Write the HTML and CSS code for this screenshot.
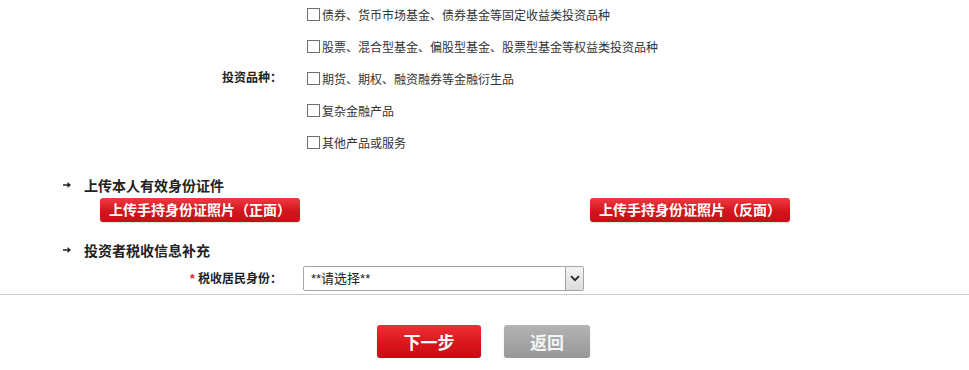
FILE: index.html
```html
<!DOCTYPE html>
<html lang="zh-CN">
<head>
<meta charset="utf-8">
<title>投资者信息</title>
<link rel="stylesheet" href="styles.css">
</head>
<body>
<div class="page">
  <div class="invest">
    <div class="field-label">投资品种：</div>
    <div class="options">
      <label class="opt"><span class="box"></span>债券、货币市场基金、债券基金等固定收益类投资品种</label>
      <label class="opt"><span class="box"></span>股票、混合型基金、偏股型基金、股票型基金等权益类投资品种</label>
      <label class="opt"><span class="box"></span>期货、期权、融资融券等金融衍生品</label>
      <label class="opt"><span class="box"></span>复杂金融产品</label>
      <label class="opt"><span class="box"></span>其他产品或服务</label>
    </div>
  </div>

  <div class="inner">
    <div class="sec-head sec-upload">
      <svg class="arrow" width="8" height="8" viewBox="0 0 8 8"><path d="M0 3.3h4.5V1L8 4 4.5 7V4.7H0z" fill="#222"/></svg>
      <span>上传本人有效身份证件</span>
    </div>
    <div class="upload-row">
      <button class="btn-red">上传手持身份证照片（正面）</button>
      <button class="btn-red">上传手持身份证照片（反面）</button>
    </div>
    <div class="sec-head sec-tax">
      <svg class="arrow" width="8" height="8" viewBox="0 0 8 8"><path d="M0 3.3h4.5V1L8 4 4.5 7V4.7H0z" fill="#222"/></svg>
      <span>投资者税收信息补充</span>
    </div>
  </div>

  <div class="tax-row">
    <div class="field-label"><span class="req">*</span> 税收居民身份：</div>
    <div class="select">
      <span class="select-text">**请选择**</span>
      <span class="select-btn">
        <svg width="10" height="7" viewBox="0 0 10 7"><path d="M1 1.2l4 4 4-4" fill="none" stroke="#222" stroke-width="1.8"/></svg>
      </span>
    </div>
  </div>

  <div class="divider"></div>

  <div class="actions">
    <button class="btn-next">下一步</button>
    <button class="btn-back">返回</button>
  </div>
</div>
</body>
</html>
```

FILE: styles.css
```css
* { box-sizing: border-box; }
html, body { margin: 0; padding: 0; background: #fff; }
body {
  font-family: "Liberation Sans", Arial, "Noto Sans CJK SC", sans-serif;
  color: #333;
  font-size: 12px;
}
.page { width: 969px; }

.invest {
  display: grid;
  grid-template-columns: 282px 1fr;
  column-gap: 21px;
  align-items: center;
  height: 156px;
}
.field-label {
  text-align: right;
  font-weight: bold;
  font-size: 12px;
  line-height: 16px;
  color: #222;
}
.options {
  display: flex;
  flex-direction: column;
  gap: 4px;
}
.opt {
  display: flex;
  align-items: center;
  height: 28px;
  font-size: 12px;
  color: #333;
}
.box {
  display: inline-block;
  width: 13px;
  height: 13px;
  border: 1px solid #6f6f6f;
  background: #fff;
  margin: 0 2px 0 4px;
}

.inner { padding-left: 63px; }
.sec-head {
  display: flex;
  align-items: center;
  height: 20px;
  font-size: 14px;
  font-weight: bold;
  color: #222;
}
.sec-head .arrow { margin-right: 13px; }
.sec-upload { margin-top: 19px; }
.sec-tax { margin-top: 18px; }

.upload-row {
  display: flex;
  gap: 290px;
  margin-top: 3px;
  padding-left: 37px;
}
.btn-red {
  width: 200px;
  height: 24px;
  border: 0;
  border-radius: 3px;
  background: linear-gradient(#ee3b41, #d3151d 55%, #c70f17);
  box-shadow: 0 1px 1px rgba(0,0,0,0.12);
  color: #fff;
  font-family: inherit;
  font-size: 14px;
  font-weight: bold;
  line-height: 24px;
  padding: 0;
}

.tax-row {
  display: grid;
  grid-template-columns: 282px 281px;
  column-gap: 21px;
  align-items: center;
  margin-top: 6px;
  height: 25px;
}
.req { color: #e02020; font-weight: bold; }
.select {
  display: flex;
  align-items: stretch;
  height: 25px;
  border: 1px solid #a5a5a5;
  border-radius: 2px;
  background: #fff;
}
.select-text {
  flex: 1;
  padding-left: 7px;
  font-size: 13px;
  line-height: 23px;
  color: #222;
}
.select-btn {
  width: 18px;
  display: flex;
  align-items: center;
  justify-content: center;
  border-left: 1px solid #a5a5a5;
  background: linear-gradient(#f4f4f4, #dcdcdc);
}

.divider {
  margin-top: 3px;
  height: 1px;
  background: #c9c9c9;
}

.actions {
  display: flex;
  justify-content: center;
  gap: 23px;
  margin-top: 30px;
  padding-right: 2px;
}
.actions button {
  height: 33px;
  border: 0;
  border-radius: 3px;
  color: #fff;
  font-family: inherit;
  font-size: 17px;
  font-weight: bold;
  padding: 0;
}
.btn-next {
  width: 104px;
  background: linear-gradient(#ef2f35, #d8141b 60%, #c50e15);
  box-shadow: 0 1px 2px rgba(0,0,0,0.15);
}
.btn-back {
  width: 86px;
  background: linear-gradient(#b4b4b4, #979797);
  color: #f4f4f4 !important;
  box-shadow: 0 1px 2px rgba(0,0,0,0.12);
}
```
